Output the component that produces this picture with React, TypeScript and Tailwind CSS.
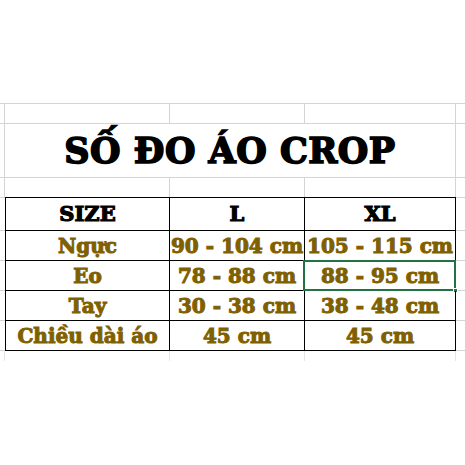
import React from 'react';

const GRAY = 'border-[#d4d4d4]';

const rows = [
  { label: 'Ngực', l: '90 - 104 cm', xl: '105 - 115 cm' },
  { label: 'Eo', l: '78 - 88 cm', xl: '88 - 95 cm', selected: true },
  { label: 'Tay', l: '30 - 38 cm', xl: '38 - 48 cm' },
  { label: 'Chiều dài áo', l: '45 cm', xl: '45 cm' },
];

const serif = "font-['DejaVu_Serif','Liberation_Serif',serif] font-bold";
const body = `${serif} text-[20px] text-[#7f6000] [-webkit-text-stroke:1px_#7f6000] whitespace-nowrap`;
const head = `${serif} text-[21px] text-black [-webkit-text-stroke:1.2px_black]`;

const App: React.FC = () => {
  return (
    <div className="w-[465px] h-[465px] bg-white overflow-hidden pt-[103px]">
      {/* blank row above title */}
      <div className={`flex h-[20px] border-t ${GRAY}`}>
        <div className={`w-[5px] border-r ${GRAY}`} />
        <div className={`w-[165px] border-r ${GRAY}`} />
        <div className={`w-[135px] border-r ${GRAY}`} />
        <div className={`w-[151px] border-r ${GRAY}`} />
        <div className="flex-1" />
      </div>

      {/* title, merged B:D */}
      <div className={`flex h-[54px] border-t ${GRAY}`}>
        <div className={`w-[5px] border-r ${GRAY}`} />
        <div className={`w-[451px] border-r ${GRAY} flex items-center justify-center`}>
          <span className={`${serif} text-[35px] leading-none text-black tracking-[0.5px] [-webkit-text-stroke:1.6px_black]`}>
            SỐ ĐO ÁO CROP
          </span>
        </div>
        <div className="flex-1" />
      </div>

      {/* blank row below title */}
      <div className={`flex h-[20px] border-t ${GRAY}`}>
        <div className={`w-[5px] border-r ${GRAY}`} />
        <div className={`w-[165px] border-r ${GRAY}`} />
        <div className={`w-[135px] border-r ${GRAY}`} />
        <div className={`w-[151px] border-r ${GRAY}`} />
        <div className="flex-1" />
      </div>

      {/* header row */}
      <div className="flex h-[34px]">
        <div className={`w-[5px] border-t border-b ${GRAY}`} />
        <div className="w-[165px] border border-black flex items-center justify-center">
          <span className={head}>SIZE</span>
        </div>
        <div className="w-[135px] border-t border-b border-r border-black flex items-center justify-center">
          <span className={head}>L</span>
        </div>
        <div className="w-[151px] border-t border-b border-r border-black flex items-center justify-center">
          <span className={head}>XL</span>
        </div>
        <div className={`flex-1 border-t border-b ${GRAY}`} />
      </div>

      {rows.map((r) => (
        <div key={r.label} className="flex h-[30px]">
          <div className={`w-[5px] border-b ${GRAY}`} />
          <div className="w-[165px] border-l border-b border-r border-black flex items-center justify-center">
            <span className={body}>{r.label}</span>
          </div>
          <div className="w-[135px] border-b border-r border-black flex items-center justify-center">
            <span className={body}>{r.l}</span>
          </div>
          <div className="relative w-[151px] border-b border-r border-black flex items-center justify-center">
            <span className={body}>{r.xl}</span>
            {r.selected && (
              <>
                <div className="absolute -top-px -left-[2px] -right-px -bottom-px border-2 border-[#217346]" />
                <div className="absolute -right-[3px] -bottom-[3px] w-[5px] h-[5px] bg-[#217346] border border-white" />
              </>
            )}
          </div>
          <div className={`flex-1 border-b ${GRAY}`} />
        </div>
      ))}

      {/* faded stubs below */}
      <div className="flex h-[10px]">
        <div className="w-[5px] border-r border-[#e6e6e6]" />
        <div className="w-[165px] border-r border-[#e6e6e6]" />
        <div className="w-[135px] border-r border-[#e6e6e6]" />
        <div className="w-[151px] border-r border-[#e6e6e6]" />
        <div className="flex-1" />
      </div>
    </div>
  );
};

export default App;
